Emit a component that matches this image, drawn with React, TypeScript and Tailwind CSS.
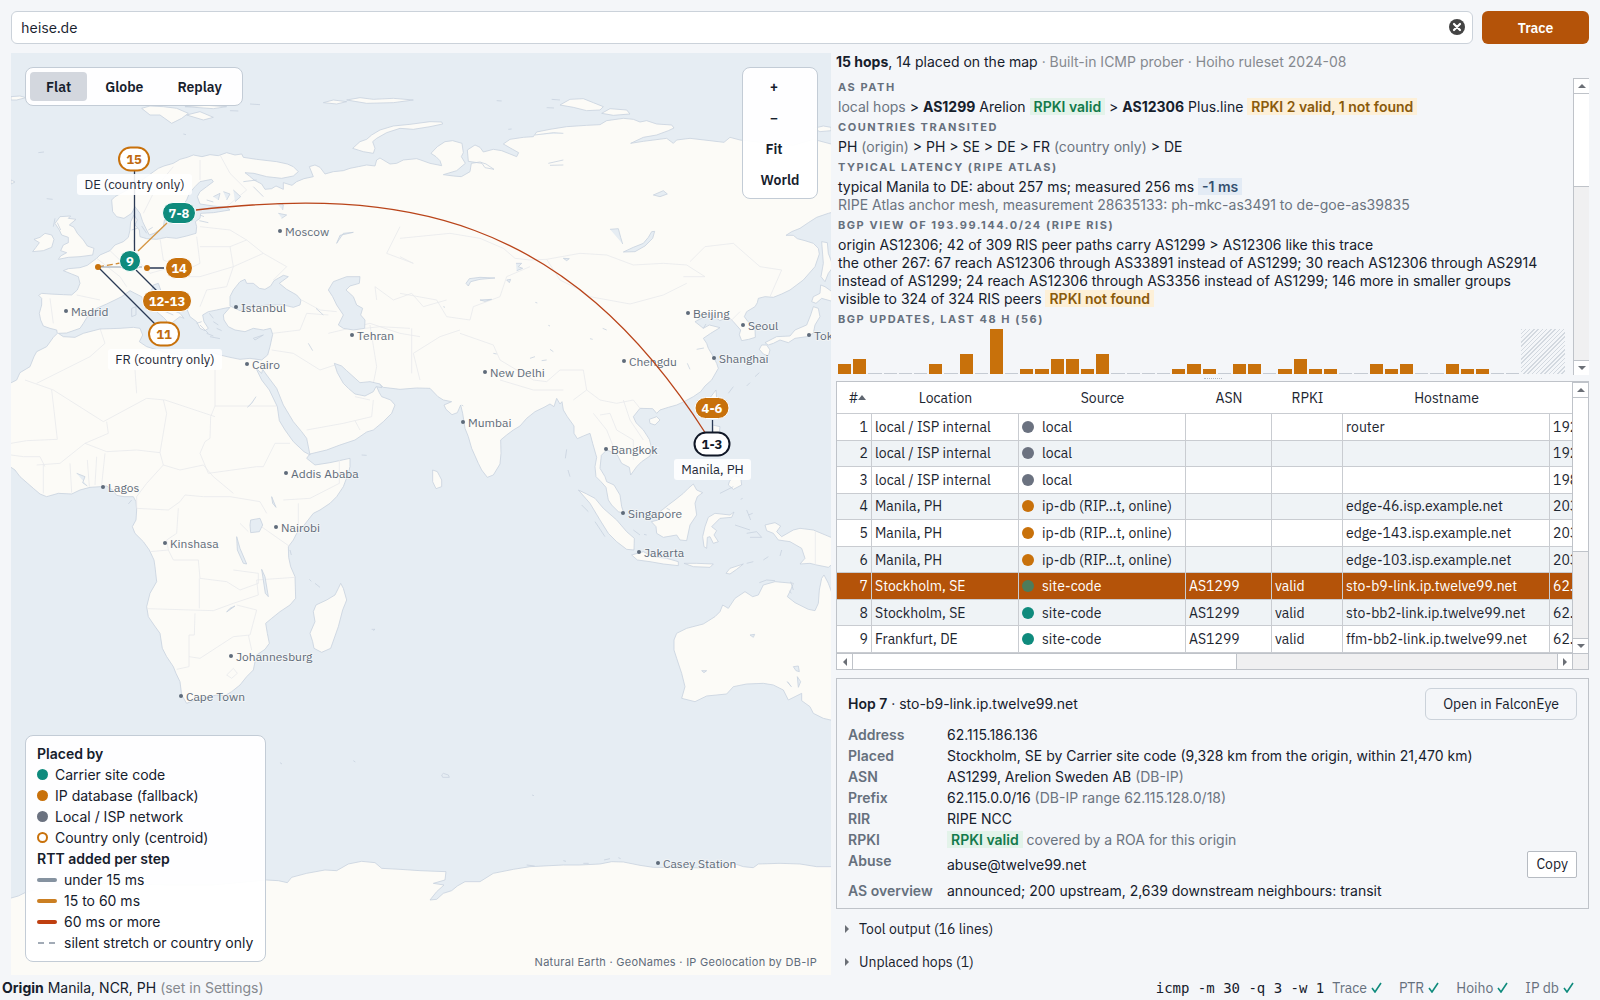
import React from "react";

const ui = "font-['IBM_Plex_Sans','Inter',sans-serif]";

/* ---------- world map (drawn at three units per pixel) ---------- */

const WATER = "#e6edf3";
const LAND = "#fcfbf7";
const COAST = "#c8d2de";

const MAINLAND =
  "M335 600L345 590L390 565L440 530L475 505L492 498L520 490L540 478L562 472L580 465L606 470L630 464L655 467L680 458L705 465L725 462L730 472L770 478L830 485L862 492L880 500L895 515L880 528L845 535L800 530L762 520L735 518L748 528L762 540L785 552L795 568L815 566L828 558L850 568L850 548L876 556L890 545L912 536L940 530L928 500L945 495L960 502L975 522L1000 515L1030 512L1050 505L1075 500L1100 495L1125 498L1130 480L1140 474L1150 480L1170 492L1190 490L1210 480L1250 476L1262 480L1290 490L1325 497L1320 482L1308 470L1293 460L1312 440L1335 425L1358 422L1386 430L1390 458L1384 470L1396 490L1370 512L1330 524L1360 528L1384 530L1410 515L1414 490L1440 486L1458 492L1482 508L1455 503L1446 490L1405 484L1402 450L1425 435L1440 442L1450 456L1480 448L1505 452L1530 462L1550 470L1556 458L1538 448L1510 432L1530 418L1570 412L1600 410L1610 396L1650 388L1700 380L1760 376L1800 374L1820 362L1870 355L1900 358L1920 366L1940 362L1970 372L2015 375L2022 384L2005 392L1970 405L1930 412L1892 430L1930 424L2000 415L2020 430L2030 420L2070 415L2130 422L2172 427L2190 412L2220 420L2290 428L2380 436L2440 418L2493 432L2500 432L2500 636L2485 640L2450 652L2425 668L2400 685L2375 695L2358 706L2380 706L2392 716L2415 722L2440 730L2455 745L2458 762L2445 800L2410 840L2370 870L2345 882L2320 892L2295 890L2275 895L2272 908L2265 920L2240 935L2233 950L2244 965L2265 985L2266 1012L2246 1018L2225 1022L2218 1004L2222 990L2200 965L2185 950L2160 962L2130 940L2110 952L2085 965L2110 985L2128 975L2160 983L2132 1000L2110 1015L2120 1030L2125 1045L2140 1070L2150 1090L2155 1105L2135 1140L2115 1158L2102 1175L2080 1190L2052 1205L2030 1215L2005 1222L1980 1230L1970 1240L1958 1226L1920 1225L1900 1250L1908 1268L1930 1290L1948 1318L1955 1345L1950 1368L1925 1385L1910 1400L1892 1425L1888 1402L1865 1390L1852 1365L1835 1356L1820 1350L1804 1366L1800 1405L1815 1430L1820 1445L1842 1455L1860 1485L1865 1520L1872 1540L1855 1535L1835 1515L1825 1500L1818 1462L1803 1445L1788 1430L1785 1400L1790 1372L1778 1330L1770 1300L1750 1308L1732 1316L1722 1300L1722 1278L1702 1250L1690 1230L1686 1205L1680 1212L1670 1195L1662 1220L1650 1212L1632 1222L1605 1235L1580 1255L1560 1278L1540 1290L1520 1305L1502 1320L1503 1360L1500 1392L1480 1425L1462 1432L1445 1410L1435 1390L1415 1345L1405 1310L1395 1285L1388 1240L1382 1215L1372 1238L1356 1244L1338 1228L1332 1215L1355 1205L1330 1200L1314 1190L1290 1165L1250 1164L1200 1168L1150 1162L1142 1155L1130 1160L1138 1178L1145 1190L1172 1200L1185 1215L1175 1240L1150 1265L1120 1290L1100 1296L1065 1320L1020 1335L980 1350L930 1362L925 1368L920 1375L945 1395L990 1388L1050 1375L1050 1400L1045 1420L1030 1460L1010 1490L990 1510L960 1530L940 1540L915 1572L890 1600L880 1620L865 1640L866 1672L872 1700L885 1730L887 1795L870 1815L840 1835L815 1855L797 1870L802 1900L808 1930L795 1948L770 1965L765 1985L760 2010L740 2030L720 2055L695 2075L675 2087L650 2085L620 2092L590 2098L560 2110L545 2085L540 2045L528 2020L520 2000L500 1970L487 1945L480 1900L462 1875L445 1850L440 1820L450 1780L470 1745L465 1700L462 1680L448 1650L430 1625L405 1600L397 1580L408 1560L410 1530L408 1505L400 1490L372 1490L350 1486L338 1470L320 1458L302 1460L270 1462L240 1470L215 1482L175 1480L140 1490L120 1482L100 1465L60 1430L45 1410L30 1400L30 1150L50 1140L60 1118L90 1100L102 1070L110 1055L140 1040L160 1012L172 1000L170 990L150 985L130 978L122 960L118 940L125 915L125 895L116 886L125 880L150 882L190 884L215 885L232 870L240 850L235 830L215 822L190 812L205 806L240 803L262 796L290 775L300 765L330 752L345 735L370 725L385 712L390 690L392 665L402 645L412 660L405 675L418 690L420 710L440 716L470 718L500 712L530 715L560 708L588 700L590 680L586 665L600 655L602 640L640 638L690 630L680 622L640 618L600 612L592 590L600 575L620 560L640 545L635 538L600 545L585 560L568 580L560 600L545 620L520 635L495 650L490 680L475 692L462 700L448 705L440 690L428 665L420 640L405 620L395 640L372 655L350 650L338 635Z";

const SEAS = [
  "M175 1000L200 999L240 985L250 970L262 950L290 925L320 912L345 900L365 890L390 872L405 880L425 890L430 905L450 918L470 935L490 952L500 962L497 980L505 985L520 965L540 950L552 955L540 940L515 930L490 905L478 885L455 870L460 855L475 850L482 870L510 895L545 915L562 930L570 950L590 965L600 985L615 992L625 985L612 965L608 945L625 935L650 930L672 925L690 922L670 945L672 960L685 980L705 990L735 995L760 985L790 990L812 985L818 1003L810 1040L803 1065L785 1080L750 1075L720 1078L690 1072L660 1065L640 1058L620 1068L615 1085L590 1085L560 1070L530 1062L500 1058L440 1040L418 1025L428 1005L420 985L400 982L360 985L300 987L250 1000L225 1012L190 1010Z",
  "M690 918L690 890L700 870L720 845L735 838L740 850L760 850L778 865L795 868L812 858L822 842L850 826L865 830L838 850L860 868L890 885L903 900L900 915L880 922L850 915L800 915L760 922L720 932Z",
  "M985 870L1000 845L1040 830L1080 830L1078 850L1050 858L1038 870L1060 890L1070 915L1088 925L1082 945L1095 960L1094 985L1060 990L1030 985L1015 975L1030 945L1010 915L998 890Z",
  "M768 1105L785 1120L788 1108L800 1125L830 1165L850 1215L880 1265L905 1295L920 1315L930 1365L912 1355L880 1325L855 1290L838 1262L832 1220L808 1170L785 1140Z",
  "M1003 1090L1025 1098L1040 1112L1080 1148L1110 1145L1140 1152L1146 1163L1128 1160L1120 1175L1095 1188L1065 1182L1045 1165L1030 1150L1012 1118Z",
];

const ISLANDS = [
  "M175 778L205 772L240 770L278 765L282 745L262 738L250 720L232 700L222 682L208 675L228 658L205 655L212 648L180 650L165 670L178 690L185 705L205 712L205 728L190 735L182 752L200 758L182 768Z",
  "M98 755L130 752L155 742L162 718L155 705L135 700L120 712L102 718L118 728L108 742Z",
  "M425 325L450 345L480 345L515 370L545 355L565 340L530 325L490 320L450 318Z",
  "M560 345L600 335L640 352L610 360Z",
  "M555 320L620 316L680 320L640 326Z",
  "M33 290L60 288L78 293L50 300L33 300Z",
  "M33 540L45 546L33 552Z",
  "M1058 445L1080 425L1100 418L1115 405L1140 390L1180 378L1230 373L1290 365L1325 366L1328 372L1290 380L1240 388L1200 385L1160 398L1130 415L1118 425L1125 445L1120 460L1090 455Z",
  "M970 308L1000 300L1040 305L1010 312Z",
  "M1040 300L1080 293L1120 298L1180 295L1240 300L1180 308L1100 310Z",
  "M1680 315L1710 298L1750 296L1780 308L1810 320L1800 330L1760 332L1720 322Z",
  "M1805 340L1830 326L1880 330L1890 342L1840 346Z",
  "M2440 385L2470 378L2493 382L2493 392L2460 395Z",
  "M2465 725L2482 728L2485 760L2500 800L2485 820L2475 845L2463 830L2470 790Z",
  "M2462 855L2475 860L2500 878L2500 905L2465 895L2448 910L2435 905L2440 890L2460 880Z",
  "M2440 920L2455 925L2460 950L2445 975L2440 1000L2420 1010L2385 1015L2365 1028L2340 1020L2320 1030L2305 1035L2295 1028L2330 1010L2370 1008L2385 990L2420 975L2432 945Z",
  "M2285 1035L2300 1035L2310 1050L2305 1068L2290 1062L2278 1048Z",
  "M2148 1170L2150 1195L2135 1220L2125 1200Z",
  "M1948 1258L1970 1250L1980 1260L1965 1275L1950 1270Z",
  "M2138 1275L2160 1280L2155 1320L2170 1340L2150 1340L2140 1310Z",
  "M2188 1445L2200 1428L2222 1432L2225 1455L2200 1468L2185 1455Z",
  "M1954 1565L1975 1560L1980 1535L2005 1515L2025 1500L2050 1480L2065 1465L2080 1452L2090 1470L2108 1478L2092 1490L2085 1510L2090 1545L2070 1575L2060 1622L2040 1620L2030 1605L1990 1612L1970 1600L1968 1580Z",
  "M1735 1470L1760 1482L1785 1495L1810 1525L1850 1560L1880 1595L1903 1615L1902 1650L1880 1648L1850 1625L1825 1600L1800 1560L1770 1510Z",
  "M1895 1665L1930 1655L1960 1670L2000 1675L2035 1685L2035 1697L1990 1692L1950 1685L1912 1680Z",
  "M2125 1552L2145 1540L2190 1545L2202 1536L2195 1552L2160 1555L2135 1580L2150 1592L2142 1605L2155 1625L2140 1630L2130 1610L2122 1612L2120 1645L2112 1640L2108 1610L2115 1580Z",
  "M2052 1690L2090 1690L2140 1692L2130 1702L2080 1700Z",
  "M2178 1720L2190 1705L2230 1692L2210 1708L2190 1722Z",
  "M2295 1575L2325 1568L2342 1578L2330 1595L2345 1610L2380 1590L2400 1585L2440 1590L2500 1615L2500 1690L2485 1702L2450 1695L2430 1690L2400 1692L2415 1675L2405 1645L2370 1625L2335 1620L2320 1600L2300 1592Z",
  "M1298 1410L1312 1415L1325 1440L1325 1460L1308 1466L1298 1445Z",
  "M1022 1750L1030 1765L1040 1800L1028 1830L1015 1880L992 1945L965 1957L942 1945L938 1925L930 1900L945 1865L940 1835L948 1815L980 1800L1005 1785L1015 1765Z",
  "M2022 1920L2030 1900L2060 1885L2110 1872L2145 1850L2160 1835L2168 1815L2185 1825L2205 1795L2235 1775L2258 1790L2275 1785L2290 1755L2325 1745L2380 1750L2372 1770L2362 1790L2385 1808L2425 1828L2445 1832L2455 1810L2458 1770L2465 1735L2472 1725L2485 1750L2500 1790L2500 2162L2470 2155L2440 2140L2430 2120L2405 2102L2405 2080L2385 2090L2365 2100L2350 2070L2320 2055L2290 2050L2240 2052L2200 2060L2180 2082L2120 2088L2085 2105L2045 2095L2055 2060L2045 2020L2030 1975L2022 1950Z",
  "M30 2695L55 2688L75 2678L140 2660L300 2650L500 2655L640 2655L800 2640L835 2642L862 2648L875 2632L920 2620L975 2610L1010 2612L1045 2592L1085 2584L1125 2588L1145 2605L1200 2608L1260 2612L1338 2615L1335 2640L1300 2650L1332 2655L1310 2675L1290 2700L1310 2698L1330 2680L1355 2672L1372 2658L1395 2645L1440 2645L1480 2620L1540 2608L1590 2600L1650 2597L1690 2595L1740 2595L1800 2592L1835 2585L1870 2586L1920 2596L1960 2602L2040 2603L2150 2604L2200 2590L2230 2600L2260 2603L2275 2592L2340 2590L2400 2592L2450 2600L2500 2600L2500 2940L30 2940Z",
];

const LAKES = [
  "M1870 756L1900 742L1930 730L1945 712L1955 695L1964 694L1958 715L1935 738L1905 755Z",
  "M1398 850L1408 836L1440 832L1485 834L1440 838L1412 845L1405 858Z",
  "M1830 688L1855 686L1862 712L1868 732",
  "M750 1575L752 1560L780 1555L788 1575L778 1595L752 1598Z",
  "M710 1610L720 1645L740 1692L730 1690L712 1650Z",
  "M785 1708L795 1730L805 1790L796 1780Z",
  "M680 1836L705 1818L690 1825Z",
  "M815 1490L828 1522L818 1510Z",
  "M1010 730L1030 700L1060 697L1020 706Z",
  "M1960 585L1990 572L2002 582L1980 590Z",
  "M1605 405L1660 398L1690 400M1645 490L1690 480M1650 496L1690 495",
  "M2380 2000L2395 1998L2398 2015L2388 2012Z M2392 2030L2402 2045L2395 2062Z M2362 2045L2374 2060Z",
  "M2250 1905L2264 1903L2260 1912Z M2105 2012L2120 2012L2112 2018Z",
  "M1548 790L1565 790L1555 800L1568 805L1550 812",
  "M640 590L660 580L655 600M670 575L690 582L680 600M700 570L722 590L705 605M620 600L640 606M730 545L770 540M760 560L790 590",
  "M830 610L850 614L848 630M835 640L860 645L845 655",
  "M742 1222L755 1210L768 1190M230 1420L255 1430L248 1448L262 1458",
  "M948 925L970 945M925 1030L938 1052",
  "M1440 900L1475 898L1455 904Z M1520 840L1532 838L1528 848Z M1690 775L1708 776L1700 782Z",
  "M750 312L780 314M690 332L715 333M115 458L132 456M140 596L158 598M550 402L558 404",
  "M1680 300L1655 298M1490 302L1505 303M1640 323L1662 324M1525 388L1535 387",
  "M395 925L408 920L408 945L395 950Z M485 930L520 945",
  "M630 1010L660 1016M760 1015L790 1005L765 1020Z",
];

const BORDERS = [
  "M645 1075L645 1218L830 1218M645 1218L632 1250L630 1315L615 1325L600 1360L625 1420L770 1400L790 1400L825 1330L870 1330",
  "M645 1250L495 1200L440 1195L310 1265L160 1170L75 1140M155 1170L172 1318L80 1322L33 1330M320 1265L325 1300L255 1330L180 1390L110 1395M255 1330L320 1355L410 1350L480 1358L500 1240L490 1200",
  "M480 1358L490 1395L440 1450L410 1490L410 1525L505 1530L540 1505L555 1485L610 1490L690 1490L780 1505L800 1540M490 1395L540 1410L610 1395L640 1430L700 1480",
  "M850 1500L930 1495L1018 1450L1018 1380M895 1510L895 1575M770 1570L870 1640M720 1570L745 1595",
  "M535 1525L530 1600L500 1620L505 1650L450 1655M505 1650L520 1680L595 1680L600 1735L680 1745L720 1770L775 1750L775 1720L700 1710",
  "M442 1826L640 1832L700 1810L775 1785L770 1740L885 1732M598 1735L598 1825M585 1840L583 1905L567 1905L567 2000L530 2008M567 1970L600 1975L700 1910L750 1905L770 1830L710 1815M745 1905L755 1950M680 2025L700 2005L712 2020L695 2035Z",
  "M130 1395L130 1480M210 1390L215 1478M262 1380L268 1460M290 1370L285 1455M315 1360L305 1455M33 1365L70 1370L120 1370L135 1400",
  "M300 985L315 1030L270 1070L190 1110L110 1150M415 1050L405 1110L410 1180",
  "M920 1290L1030 1270L1115 1250L1120 1200M1065 1262L1080 1290M1110 1200L1065 1190M815 1050L880 1060L960 1110L1005 1095",
  "M818 1000L900 990L920 940L985 945M985 1000L1110 970L1200 1000L1260 1010M1110 975L1130 1100L1120 1150M905 900L960 930L1010 935",
  "M1095 985L1140 980L1230 985M1130 900L1125 860L1180 900L1235 880L1270 920L1340 900M1235 985L1235 1120M1260 1140L1240 1060L1320 1010L1380 990",
  "M1200 680L1160 760L1240 790L1200 770M1200 715L1350 700L1440 715L1510 745L1545 775L1590 780L1640 778L1740 760L1820 765L1900 795L1990 790L2060 795L2115 830L2050 830M1640 778L1680 840L1740 870L1770 890L1890 912L1990 885L2060 850",
  "M2070 785L2115 740L2200 730L2280 800L2345 810L2310 890M2190 965L2220 935M1590 800L1520 830L1500 890L1420 920L1410 960L1340 950L1310 900L1200 880",
  "M1380 1000L1480 1035L1500 1080L1600 1140L1640 1145L1680 1110L1750 1110L1760 1170L1800 1200L1850 1210L1900 1200L1920 1225M1760 1170L1720 1200M1500 1140L1600 1170L1690 1170",
  "M1800 1245L1830 1240L1850 1290L1900 1320L1900 1380M1780 1240L1820 1290L1840 1340M1870 1200L1890 1260L1930 1320M1985 1530L2040 1530L2060 1485",
  "M230 885L300 900M150 895L160 970M290 775L360 830L380 860M330 752L370 790M400 720L410 780L450 820L520 800M480 715L490 780L560 810L600 790L590 710M520 830L600 830L700 800L690 740L600 740",
  "M690 740L740 720L690 690L600 680M740 720L790 760L700 800L680 860L620 870L600 920M790 760L860 800L820 840M520 500L470 560L430 640M600 480L600 540M660 465L690 520L740 570L680 620",
];

const CITIES: [string, number, number][] = [
  ["Moscow", 280, 231], ["Madrid", 66, 311], ["Istanbul", 236, 307], ["Tehran", 352, 335],
  ["Cairo", 247, 364], ["New Delhi", 485, 372], ["Beijing", 688, 313], ["Seoul", 743, 325],
  ["Shanghai", 714, 358], ["Chengdu", 624, 361], ["Tokyo", 809, 335], ["Mumbai", 463, 422],
  ["Bangkok", 606, 449], ["Singapore", 623, 513], ["Jakarta", 639, 552], ["Lagos", 103, 487],
  ["Addis Ababa", 286, 473], ["Nairobi", 276, 527], ["Kinshasa", 165, 543],
  ["Johannesburg", 231, 656], ["Cape Town", 181, 696], ["Casey Station", 658, 863],
];

type Pin = { t: string; x: number; y: number; w: number; h: number; fill: string; stroke: string; ink: string; sw: number };
const PINS: Pin[] = [
  { t: "15", x: 134, y: 159, w: 30, h: 23, fill: "#fff", stroke: "#c8710b", ink: "#c06a10", sw: 2 },
  { t: "7-8", x: 179, y: 213, w: 33, h: 21, fill: "#0f8b7d", stroke: "#fff", ink: "#fff", sw: 1 },
  { t: "9", x: 130, y: 261, w: 21, h: 21, fill: "#0f8b7d", stroke: "#fff", ink: "#fff", sw: 1 },
  { t: "14", x: 179, y: 268, w: 27, h: 21, fill: "#c8710b", stroke: "#fff", ink: "#fff", sw: 1 },
  { t: "12-13", x: 167, y: 301, w: 49, h: 21, fill: "#c8710b", stroke: "#fff", ink: "#fff", sw: 1 },
  { t: "11", x: 164, y: 334, w: 30, h: 23, fill: "#fff", stroke: "#c8710b", ink: "#c06a10", sw: 2 },
  { t: "4-6", x: 712, y: 408, w: 34, h: 21, fill: "#c8710b", stroke: "#fff", ink: "#fff", sw: 1 },
  { t: "1-3", x: 712, y: 444, w: 35, h: 23, fill: "#fff", stroke: "#111827", ink: "#111827", sw: 2 },
];

const TAGS: [string, number, number, number][] = [
  ["DE (country only)", 77, 174, 115],
  ["FR (country only)", 108, 349, 114],
  ["Manila, PH", 674, 459, 77],
];

function WorldMap() {
  return (
    <svg viewBox="11 53 820 922" preserveAspectRatio="xMidYMid slice" className={`absolute inset-0 h-full w-full ${ui}`} role="img" aria-label="Route map">
      <rect x="-800" y="-800" width="3200" height="3200" fill={WATER} />
      <g transform="scale(0.333333)" strokeWidth="2.4" strokeLinejoin="round" stroke={COAST}>
        <path d={MAINLAND} fill={LAND} />
        {BORDERS.map((d, i) => <path key={i} d={d} fill="none" stroke="#e9eaec" />)}
        {SEAS.map((d, i) => <path key={i} d={d} fill={WATER} />)}
        {ISLANDS.map((d, i) => <path key={i} d={d} fill={LAND} />)}
        <path d="M2446 1594L2446 1694" fill="none" stroke="#e9eaec" />
        {LAKES.map((d, i) => <path key={i} d={d} fill={WATER} />)}
        <g fill="none">
          <path d="M165 655L160 680M172 668L182 690M395 690L412 685M425 678L440 700M445 690L458 682M600 645L612 650M598 662L625 668" />
          <path d="M590 970L605 965M628 940L640 955M640 965L655 975M650 985L665 992M600 975L625 1000M620 1000L640 1008" />
          <path d="M1700 1348L1696 1375M1704 1410L1710 1430M1745 1515L1765 1535M1785 1565L1815 1610M1900 1590L1920 1605M1932 1603L1940 1605M2000 1525L2010 1530" />
          <path d="M2240 1530L2252 1560M2245 1545L2258 1540M2240 1600L2270 1595L2285 1612L2250 1612M2205 1575L2250 1590M2160 1480L2200 1460M2345 1650L2340 1668M2290 1680L2305 1670M2240 1690L2260 1685M2278 1748L2300 1740L2325 1742M2222 1498L2228 1495M2372 1745L2380 1770M2368 1772L2374 1780" />
          <path d="M2240 1158L2250 1148M2265 1130L2278 1118M2185 1180L2200 1160M2090 1048L2112 1044M2062 1090L2070 1108M2110 985L2118 972" />
          <path d="M928 1738L934 1744M945 1750L960 1762M1085 1365L1100 1366M1115 1888L1125 1888L1120 1892M395 1500L385 1512M870 1650L874 1665" />
          <path d="M1325 2325L1330 2320L1345 2325L1348 2332L1328 2332ZM1596 2385L1602 2387M840 2288L846 2292M1060 2282L1066 2286M1690 2582L1698 2584M1750 2590L1766 2590M1812 2580L1830 2576M1855 2573L1862 2576M1580 2595L1604 2598" />
          <path d="M1330 920L1335 922M1606 907L1612 909M1645 976L1650 978M1770 1016L1778 1018M1808 985L1820 990M1590 1075L1605 1070M1625 1082L1640 1080M1650 1048L1660 1055M1480 1060L1490 1062M1385 1215L1390 1218" />
        </g>
      </g>

      <g fontSize="12" fill="#5f6b7a">
        {CITIES.map(([name, x, y]) => (
          <g key={name}>
            <circle cx={x} cy={y} r="2" />
            <text x={x + 5} y={y + 5} stroke="#fcfbf7" strokeWidth="2" strokeOpacity="0.5" paintOrder="stroke">{name}</text>
          </g>
        ))}
      </g>

      <g fill="none">
        <path d="M196 210C400 187 565 213 706 434" stroke="#b9441a" strokeWidth="1.3" />
        <path d="M138 251L167 223" stroke="#d59643" strokeWidth="1.3" />
        <path d="M98 267L120 263" stroke="#d08a35" strokeWidth="1.3" strokeDasharray="6 3" />
        <path d="M98 267H142" stroke="#93a0af" strokeWidth="1" />
        <g stroke="#2b3a55" strokeWidth="1.3">
          <path d="M134.500 170V251M98 267L157 326M136 270L158 292M149 268H164M712.500 420V433" />
        </g>
      </g>
      <g fill="#c8710b">
        <circle cx="98" cy="267" r="3" />
        <circle cx="147" cy="268" r="3" />
      </g>
      {TAGS.map(([t, x, y, w]) => (
        <g key={t}>
          <rect x={x} y={y} width={w} height="21" rx="3" fill="#fff" fillOpacity="0.88" />
          <text x={x + w / 2} y={y + 15} textAnchor="middle" fontSize="13" fill="#1f2937">{t}</text>
        </g>
      ))}
      {PINS.map((p) => (
        <g key={p.t}>
          <rect x={p.x - p.w / 2} y={p.y - p.h / 2} width={p.w} height={p.h} rx={p.h / 2} fill={p.fill} stroke={p.stroke} strokeWidth={p.sw} />
          <text x={p.x} y={p.y + 5} textAnchor="middle" fontSize="13" fontWeight="700" fill={p.ink}>{p.t}</text>
        </g>
      ))}
    </svg>
  );
}

/* ---------- small parts ---------- */

function Arrow({ dir }: { dir: "up" | "down" | "left" | "right" }) {
  const d = { up: "M1 7L5 3L9 7Z", down: "M1 3L5 7L9 3Z", left: "M7 1L3 5L7 9Z", right: "M3 1L7 5L3 9Z" }[dir];
  return <svg viewBox="0 0 10 10" className="h-[10px] w-[10px]" aria-hidden="true"><path d={d} fill="#6b6f76" /></svg>;
}

function VScroll({ thumb }: { thumb: string }) {
  return (
    <div className="flex w-[16px] shrink-0 flex-col border-l border-t border-[#bfc3c9] bg-[#f0f0f1]">
      <button aria-label="Scroll up" className="flex h-[15px] shrink-0 items-center justify-center border-b border-[#bfc3c9] bg-white"><Arrow dir="up" /></button>
      <div className="min-h-0 flex-1"><div className={`border-b border-[#bfc3c9] bg-white ${thumb}`} /></div>
      <button aria-label="Scroll down" className="flex h-[15px] shrink-0 items-center justify-center border-t border-[#bfc3c9] bg-white"><Arrow dir="down" /></button>
    </div>
  );
}

const Head = ({ children }: { children: React.ReactNode }) => (
  <h2 className="h-[22px] pt-[2px] text-[11px] font-bold uppercase leading-[18px] tracking-[0.14em] text-[#66707d]">{children}</h2>
);
const Mute = ({ children }: { children: React.ReactNode }) => <span className="text-[#6b7480]">{children}</span>;
const Ok = ({ children }: { children: React.ReactNode }) => <span className="bg-[#e3f3ea] px-1 font-semibold text-[#137a4b]">{children}</span>;
const Warn = ({ children }: { children: React.ReactNode }) => <span className="bg-[#fdf0d8] px-1 font-semibold text-[#8a5a0b]">{children}</span>;

const UPDATES = [2, 3, 0, 0, 0, 0, 2, 0, 4, 0, 9, 0, 1, 1, 3, 3, 1, 4, 0, 0, 0, 0, 1, 2, 1, 0, 2, 2, 0, 1, 3, 1, 1, 0, 0, 2, 1, 2, 0, 0, 2, 1, 1, 0, 0];

type Row = [string, string, string, string, string, string, string, string];
const GREY = "bg-[#6b7280]", ORANGE = "bg-[#c8710b]", TEAL = "bg-[#0f8b7d]";
const ROWS: Row[] = [
  ["1", "local / ISP internal", "local", "", "", "router", "192.168.1.1", GREY],
  ["2", "local / ISP internal", "local", "", "", "", "192.168.100.1", GREY],
  ["3", "local / ISP internal", "local", "", "", "", "198.51.100.1", GREY],
  ["4", "Manila, PH", "ip-db (RIP…t, online)", "", "", "edge-46.isp.example.net", "203.0.113.46", ORANGE],
  ["5", "Manila, PH", "ip-db (RIP…t, online)", "", "", "edge-143.isp.example.net", "203.0.113.143", ORANGE],
  ["6", "Manila, PH", "ip-db (RIP…t, online)", "", "", "edge-103.isp.example.net", "203.0.113.103", ORANGE],
  ["7", "Stockholm, SE", "site-code", "AS1299", "valid", "sto-b9-link.ip.twelve99.net", "62.115.186.136", "bg-[#4d7c5b]"],
  ["8", "Stockholm, SE", "site-code", "AS1299", "valid", "sto-bb2-link.ip.twelve99.net", "62.115.140.216", TEAL],
  ["9", "Frankfurt, DE", "site-code", "AS1299", "valid", "ffm-bb2-link.ip.twelve99.net", "62.115.138.105", TEAL],
];

const cell = "overflow-hidden whitespace-nowrap border-r border-b border-[#c9ccd1] px-[3px] py-0";

function HopTable() {
  return (
    <section className={`flex min-h-0 flex-1 flex-col border border-[#bfc3c9] bg-white ${ui}`}>
      <div className="flex min-h-0 flex-1">
        <div className="min-w-0 flex-1 overflow-hidden">
          <table className="h-full w-[832px] table-fixed border-separate border-spacing-0 text-[14px] leading-[20px] text-[#1c2530]">
            <colgroup>
              <col className="w-[35px]" /><col className="w-[147px]" /><col className="w-[167px]" /><col className="w-[86px]" />
              <col className="w-[71px]" /><col className="w-[207px]" /><col />
            </colgroup>
            <thead>
              <tr className="h-[32px]">
                <th scope="col" className="border-b border-[#c9ccd1] p-0 font-normal">
                  <span className="flex items-center justify-center pl-[6px]">#<svg viewBox="0 0 8 5" className="h-[5px] w-[8px]" aria-hidden="true"><path d="M0 5L4 0L8 5Z" fill="#5f6670" /></svg></span>
                </th>
                {["Location", "Source", "ASN", "RPKI", "Hostname"].map((h) => (
                  <th key={h} scope="col" className="border-b border-[#c9ccd1] p-0 font-normal">{h}</th>
                ))}
                <th scope="col" aria-label="Address" className="border-b border-[#c9ccd1] p-0" />
              </tr>
            </thead>
            <tbody>
              {ROWS.map(([n, loc, src, asn, rpki, host, addr, dot]) => (
                <tr key={n} className={n === "7" ? "bg-[#b45309] text-white" : Number(n) % 2 === 0 ? "bg-[#eff3f6]" : "bg-white"}>
                  <td className={`${cell} text-right`}>{n}</td>
                  <td className={cell}>{loc}</td>
                  <td className={cell}><span className="flex items-center gap-2"><span className={`h-[12px] w-[12px] shrink-0 rounded-full ${dot}`} />{src}</span></td>
                  <td className={cell}>{asn}</td>
                  <td className={cell}>{rpki}</td>
                  <td className={cell}>{host}</td>
                  <td className={cell}>{addr}</td>
                </tr>
              ))}
            </tbody>
          </table>
        </div>
        <VScroll thumb="h-[64%]" />
      </div>
      <div className="flex h-[16px] shrink-0 border-t border-[#bfc3c9] bg-[#f0f0f1]">
        <button aria-label="Scroll left" className="flex w-[16px] items-center justify-center border-r border-[#bfc3c9] bg-white"><Arrow dir="left" /></button>
        <div className="flex-1"><div className="h-full w-[54.5%] border-r border-[#bfc3c9] bg-white" /></div>
        <button aria-label="Scroll right" className="flex w-[16px] items-center justify-center border-l border-r border-[#bfc3c9] bg-white"><Arrow dir="right" /></button>
        <div className="w-[15px]" />
      </div>
    </section>
  );
}

function Field({ label, children }: { label: string; children: React.ReactNode }) {
  return (
    <div className="flex">
      <dt className="w-[99px] shrink-0 font-semibold text-[#66707d]">{label}</dt>
      <dd className="min-w-0 flex-1">{children}</dd>
    </div>
  );
}

const LEGEND_DOTS: [string, string][] = [
  ["Carrier site code", "bg-[#0f8b7d]"],
  ["IP database (fallback)", "bg-[#c8710b]"],
  ["Local / ISP network", "bg-[#6b7280]"],
  ["Country only (centroid)", "border-2 border-[#c8710b] bg-white"],
];
const LEGEND_LINES: [string, string][] = [
  ["under 15 ms", "bg-[#8592a0]"],
  ["15 to 60 ms", "bg-[#cb7f22]"],
  ["60 ms or more", "bg-[#bf3f10]"],
];

const tool = "flex h-[29px] items-center justify-center rounded-[4px] px-[16px]";

export default function App() {
  return (
    <div className="flex h-screen min-h-[1000px] flex-col bg-[#f4f6f9] pt-[11px] font-['Inter',sans-serif] text-[14px] leading-[18px] text-[#16202c]">
      <form className={`flex h-[33px] shrink-0 gap-[9px] px-[11px] ${ui}`} onSubmit={(e) => e.preventDefault()}>
        <div className="relative flex-1">
          <input aria-label="Host to trace" defaultValue="heise.de" className="h-full w-full rounded-[6px] border border-[#cbd2da] bg-white px-[9px] text-[15px] outline-none" />
          <button type="button" aria-label="Clear" className="absolute right-[8px] top-[8px]">
            <svg viewBox="0 0 16 16" className="h-[16px] w-[16px]" aria-hidden="true"><circle cx="8" cy="8" r="8" fill="#444" /><path d="M5 5L11 11M11 5L5 11" stroke="#fff" strokeWidth="2.200" strokeLinecap="round" /></svg>
          </button>
        </div>
        <button type="submit" className="w-[107px] rounded-[6px] bg-[#b45309] text-[14px] font-semibold text-white">Trace</button>
      </form>

      <main className="mt-[9px] grid min-h-0 flex-1 grid-cols-[820fr_753fr] gap-[5px] px-[11px]">
        <section className="relative overflow-hidden bg-[#e6edf3]">
          <WorldMap />
          <div className={`absolute left-[14px] top-[14px] flex gap-[2px] rounded-[8px] border border-[#c3ccd6] bg-white/95 p-[4px] font-semibold ${ui}`}>
            <button className={`${tool} bg-[#d3d7de]`}>Flat</button>
            <button className={tool}>Globe</button>
            <button className={tool}>Replay</button>
          </div>
          <div className={`absolute right-[13px] top-[14px] flex w-[76px] flex-col items-start gap-[2px] rounded-[8px] border border-[#c3ccd6] bg-white/95 px-[4px] py-[4px] font-semibold ${ui}`}>
            <button className="h-[29px] w-[54px]">+</button>
            <button className="h-[29px] w-[54px]">−</button>
            <button className="h-[29px] w-[54px]">Fit</button>
            <button className="h-[29px] w-[66px]">World</button>
          </div>
          <div className="absolute bottom-[13px] left-[14px] rounded-[8px] border border-[#c3ccd6] bg-white/95 pb-[8px] pl-[11px] pr-[12px] pt-[7px] leading-[21px]">
            <h2 className="font-semibold">Placed by</h2>
            <ul>
              {LEGEND_DOTS.map(([t, c]) => <li key={t} className="flex items-center gap-[7px]"><span className={`h-[11px] w-[11px] rounded-full ${c}`} />{t}</li>)}
            </ul>
            <h2 className="font-semibold">RTT added per step</h2>
            <ul>
              {LEGEND_LINES.map(([t, c]) => <li key={t} className="flex items-center gap-[7px]"><span className={`h-[4px] w-[20px] rounded-full ${c}`} />{t}</li>)}
              <li className="flex items-center gap-[7px]"><span className="flex w-[20px] gap-[5px] pl-[1px]"><span className="h-[2px] w-[6px] bg-[#a2abb6]" /><span className="h-[2px] w-[6px] bg-[#a2abb6]" /></span>silent stretch or country only</li>
            </ul>
          </div>
          <p className="absolute bottom-[4px] right-[14px] text-[11px] tracking-wide text-[#5f6b7a]">Natural Earth · GeoNames · IP Geolocation by DB-IP</p>
        </section>

        <section className="flex min-h-0 min-w-0 flex-col">
          <p className="h-[25px] shrink-0"><strong className="font-bold">15 hops</strong>, 14 placed on the map <span className="text-[#85898f]">· Built-in ICMP prober · Hoiho ruleset 2024-08</span></p>

          <div className="flex h-[297px] shrink-0 overflow-hidden">
            <div className="-mt-[2px] min-w-0 flex-1 pl-[2px] pr-[8px]">
              <Head>AS path</Head>
              <p><Mute>local hops</Mute> &gt; <b className="font-bold">AS1299</b> Arelion <Ok>RPKI valid</Ok> &gt; <b className="font-bold">AS12306</b> Plus.line <Warn>RPKI 2 valid, 1 not found</Warn></p>
              <Head>Countries transited</Head>
              <p>PH <Mute>(origin)</Mute> &gt; PH &gt; SE &gt; DE &gt; FR <Mute>(country only)</Mute> &gt; DE</p>
              <Head>Typical latency (RIPE Atlas)</Head>
              <p>typical Manila to DE: about 257 ms; measured 256 ms <span className="bg-[#e3ebf5] px-1 font-semibold text-[#34506f]">-1 ms</span></p>
              <p><Mute>RIPE Atlas anchor mesh, measurement 28635133: ph-mkc-as3491 to de-goe-as39835</Mute></p>
              <Head>BGP view of 193.99.144.0/24 (RIPE RIS)</Head>
              <p>origin AS12306; 42 of 309 RIS peer paths carry AS1299 &gt; AS12306 like this trace</p>
              <p>the other 267: 67 reach AS12306 through AS33891 instead of AS1299; 30 reach AS12306 through AS2914 instead of AS1299; 24 reach AS12306 through AS3356 instead of AS1299; 146 more in smaller groups</p>
              <p>visible to 324 of 324 RIS peers <Warn>RPKI not found</Warn></p>
              <Head>BGP updates, last 48 h (56)</Head>
              <div className="-mt-px grid h-[45px] grid-cols-[repeat(48,minmax(0,1fr))] items-end gap-[2px]">
                {UPDATES.map((v, i) => (
                  <span key={i} className={v ? "bg-[#c8710b]" : "bg-[#c5cbd3]"} style={{ height: v ? v * 5 : 1 }} />
                ))}
                <span className="col-span-3 h-full bg-[repeating-linear-gradient(135deg,#d3d9e0_0_1px,transparent_1px_3px)]" />
              </div>
            </div>
            <VScroll thumb="h-[35%]" />
          </div>

          <div className="flex h-[6px] shrink-0 items-center justify-center"><span className="w-[18px] border-t border-dotted border-[#b3b9c1]" /></div>

          <HopTable />

          <section className="mt-[8px] shrink-0 border border-[#bfc3c9] px-[11px] pb-[7px] pt-[9px]">
            <div className="flex items-center justify-between">
              <p><strong className="font-semibold">Hop 7</strong> · sto-b9-link.ip.twelve99.net</p>
              <button className={`h-[32px] rounded-[6px] border border-[#cbd2da] px-[17px] ${ui}`}>Open in FalconEye</button>
            </div>
            <dl className="mt-[4px] leading-[21px]">
              <Field label="Address">62.115.186.136</Field>
              <Field label="Placed">Stockholm, SE by Carrier site code (9,328 km from the origin, within 21,470 km)</Field>
              <Field label="ASN">AS1299, Arelion Sweden AB <Mute>(DB-IP)</Mute></Field>
              <Field label="Prefix">62.115.0.0/16 <Mute>(DB-IP range 62.115.128.0/18)</Mute></Field>
              <Field label="RIR">RIPE NCC</Field>
              <Field label="RPKI"><Ok>RPKI valid</Ok> <Mute>covered by a ROA for this origin</Mute></Field>
              <Field label="Abuse">
                <span className="mb-[2px] mt-px flex items-center justify-between">abuse@twelve99.net
                  <button className={`h-[27px] rounded-[2px] border border-[#b6bbc2] bg-white px-[8px] ${ui}`}>Copy</button>
                </span>
              </Field>
              <Field label="AS overview">announced; 200 upstream, 2,639 downstream neighbours: transit</Field>
            </dl>
          </section>

          <div className={`flex shrink-0 flex-col items-start gap-[6px] pl-[6px] pt-[6px] ${ui}`}>
            <button className="flex h-[27px] items-center gap-[7px]"><Arrow dir="right" />Tool output (16 lines)</button>
            <button className="flex h-[27px] items-center gap-[7px]"><Arrow dir="right" />Unplaced hops (1)</button>
          </div>
        </section>
      </main>

      <footer className="flex h-[25px] shrink-0 items-center justify-between pl-[2px] pr-[26px]">
        <p><strong className="font-bold">Origin</strong> Manila, NCR, PH <span className="text-[#85898f]">(set in Settings)</span></p>
        <p className={`flex items-center text-[#66707d] ${ui}`}>
          <code className="mr-[8px] whitespace-pre font-['DejaVu_Sans_Mono',monospace] text-[14px] text-[#16202c]">icmp -m 30 -q 3 -w 1</code>
          {["Trace", "PTR", "Hoiho", "IP db"].map((t) => (
            <span key={t} className="mr-[17px] flex items-center gap-[4px] last:mr-0">{t}
              <svg viewBox="0 0 11 11" className="h-[11px] w-[11px]" aria-label="ok"><path d="M1 6L4 10L10 1" fill="none" stroke="#0f8b7d" strokeWidth="1.600" /></svg>
            </span>
          ))}
        </p>
      </footer>
    </div>
  );
}
